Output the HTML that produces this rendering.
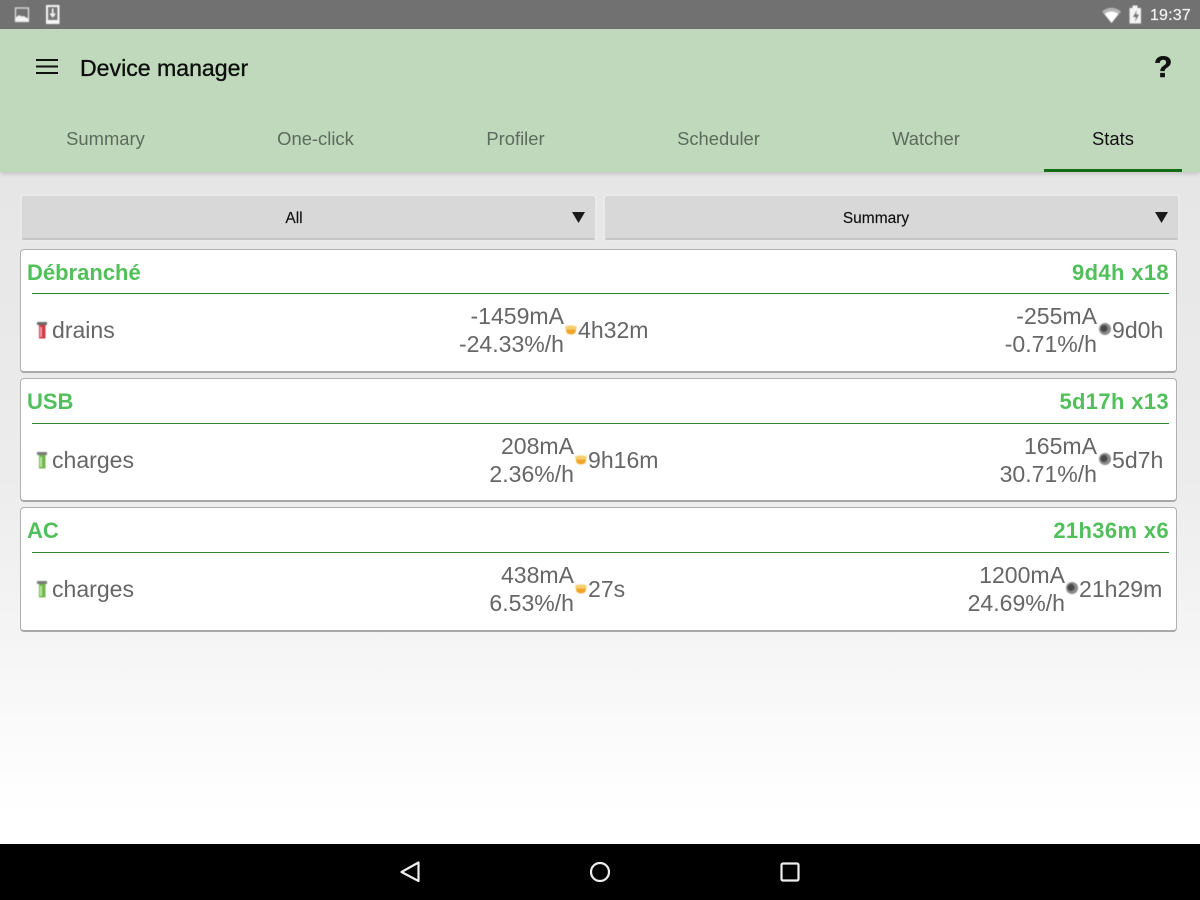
<!DOCTYPE html>
<html>
<head>
<meta charset="utf-8">
<style>
html,body{margin:0;padding:0}
body{width:1200px;height:900px;overflow:hidden;position:relative;font-family:"Liberation Sans",sans-serif;background:#fff}
div,span{position:absolute;white-space:nowrap}
svg{position:absolute;overflow:visible}
#bg{left:0;top:172px;width:1200px;height:672px;background:linear-gradient(#e6e6e6 0,#ececec 300px,#f5f5f5 470px,#fff 640px)}
#status{left:0;top:0;width:1200px;height:29px;background:#727171}
#bar{left:0;top:29px;width:1200px;height:143px;background:#c0d9bc;box-shadow:0 2px 4px rgba(0,0,0,.14)}
#nav{left:0;top:844px;width:1200px;height:56px;background:#000}
.tab{top:128px;font-size:18.4px;line-height:22px;color:#5c6b5c;transform:translateX(-50%)}
.spin{top:196px;height:42px;background:#d7d8d7;border-bottom:2px solid #c4c5c4;border-radius:2px;box-shadow:0 0 0 2px #eaeaea}
.sl{top:209px;font-size:15.500px;line-height:20px;color:#111;transform:translateX(-50%);-webkit-text-stroke:.15px #111}
.card{left:20px;width:1155px;height:121px;background:#fff;border:1px solid #b0b0b0;border-bottom:2px solid #a8a8a8;border-radius:4px;box-sizing:content-box}
.hd{font-size:22px;line-height:26px;font-weight:bold;color:#52c05a}
.hr{letter-spacing:.35px}
.rule{left:32px;width:1137px;height:1px;background:#2a8a30}
.v{font-size:23.050px;line-height:28px;color:#666}
.r{text-align:right}
.ic{filter:blur(.5px)}
</style>
</head>
<body>
<div id="bg"></div>
<div id="status"></div>
<div id="bar"></div>
<div id="nav"></div>

<!-- status icons -->
<svg class="ic" style="left:0;top:0" width="70" height="29">
<rect x="15.500" y="8" width="13" height="13.500" fill="none" stroke="#e8e8e8" stroke-width="1.200"/>
<path d="M16 21v-3.500l3-2.500 2.500 1.500 2-.5 4.500 2.500v2.500z" fill="#f4f4f4"/>
<rect x="46" y="5" width="13.500" height="19" fill="#f6f6f6"/>
<rect x="48" y="7" width="9.500" height="13" fill="#777"/>
<path d="M52.700 8.500v7.500M50.300 13.500l2.400 3 2.400-3" fill="none" stroke="#f6f6f6" stroke-width="1.600"/>
</svg>
<svg class="ic" style="left:1100px;top:0" width="50" height="29">
<path d="M2 11.500Q11.500 4 21 11.500L11.500 23z" fill="#ececec" opacity=".55"/>
<path d="M4.500 14Q11.500 9 18.500 14L11.500 23z" fill="#fff"/>
<path d="M29.500 8h3V5.500h5V8h3.500v15.500H29.500z" fill="#f4f4f4"/>
<path d="M37 10l-4 7h3l-1 5 4-7.500h-3z" fill="#727171"/>
</svg>
<span style="left:1150px;top:6px;font-size:16px;line-height:19px;color:#f0f0f0;letter-spacing:.15px;-webkit-text-stroke:.25px #f0f0f0">19:37</span>

<!-- toolbar -->
<svg style="left:36px;top:59px" width="22" height="16">
<path d="M0 1H22M0 7.500H22M0 14H22" stroke="#111" stroke-width="2" fill="none"/>
</svg>
<span style="left:80px;top:54px;font-size:23.100px;line-height:28px;color:#0c0f0c;-webkit-text-stroke:.35px #0c0f0c">Device manager</span>
<span style="left:1154px;top:49px;font-size:30px;line-height:38px;font-weight:bold;color:#111;-webkit-text-stroke:.5px #111">?</span>

<span class="tab" style="left:105.500px">Summary</span>
<span class="tab" style="left:315.500px">One-click</span>
<span class="tab" style="left:515.500px">Profiler</span>
<span class="tab" style="left:718.500px">Scheduler</span>
<span class="tab" style="left:926px">Watcher</span>
<span class="tab" style="left:1113px;color:#111">Stats</span>
<div style="left:1044px;top:169px;width:138px;height:3px;background:#146c14"></div>

<!-- spinners -->
<div class="spin" style="left:22px;width:573px"></div>
<div class="spin" style="left:605px;width:573px"></div>
<span class="sl" style="left:294px">All</span>
<span class="sl" style="left:876px">Summary</span>
<svg style="left:0;top:0" width="1200" height="240">
<path d="M572 212h13l-6.500 11z" fill="#1a1a1a"/>
<path d="M1155 212h13l-6.500 11z" fill="#1a1a1a"/>
</svg>

<!-- card 1 -->
<div class="card" style="top:249px"></div>
<span class="hd" style="left:27px;top:260px">Débranché</span>
<span class="hd hr r" style="right:31px;top:260px">9d4h x18</span>
<div class="rule" style="top:293px"></div>
<svg class="ic" style="left:36px;top:321px" width="12" height="18">
<path d="M1 1.500h10l-1.500 3v13H3v-13z" fill="#d23a48"/><path d="M1 1h10v3H1z" fill="#6a6a6a"/><path d="M4 6h2v10H4z" fill="#f0a0a8"/>
</svg>
<span class="v" style="left:52px;top:316px">drains</span>
<span class="v r" style="right:636px;top:302px">-1459mA</span>
<span class="v r" style="right:636px;top:330px">-24.33%/h</span>
<svg class="ic" style="left:564px;top:323px" width="14" height="14"><path d="M1 3.500Q7 1 13 3.500L11.500 10Q7 13 2.500 10z" fill="#f6d070"/><path d="M2 6.500h10L11 10Q7 13 3 10z" fill="#f0a428"/></svg>
<span class="v" style="left:578px;top:316px">4h32m</span>
<span class="v r" style="right:103px;top:302px">-255mA</span>
<span class="v r" style="right:103px;top:330px">-0.71%/h</span>
<svg class="ic" style="left:1098px;top:322px" width="14" height="14"><circle cx="7" cy="7" r="6" fill="#8a8a8a"/><circle cx="6" cy="6.500" r="3.500" fill="#484848"/></svg>
<span class="v" style="left:1112px;top:316px">9d0h</span>

<!-- card 2 -->
<div class="card" style="top:378px"></div>
<span class="hd" style="left:27px;top:389px">USB</span>
<span class="hd hr r" style="right:31px;top:389px">5d17h x13</span>
<div class="rule" style="top:423px"></div>
<svg class="ic" style="left:36px;top:451px" width="12" height="18">
<path d="M1 1.500h10l-1.500 3v13H3v-13z" fill="#6fb84a"/><path d="M1 1h10v3H1z" fill="#7a7a7a"/><path d="M4 6h2v10H4z" fill="#c4e8a8"/>
</svg>
<span class="v" style="left:52px;top:446px">charges</span>
<span class="v r" style="right:626px;top:432px">208mA</span>
<span class="v r" style="right:626px;top:460px">2.36%/h</span>
<svg class="ic" style="left:574px;top:453px" width="14" height="14"><path d="M1 3.500Q7 1 13 3.500L11.500 10Q7 13 2.500 10z" fill="#f6d070"/><path d="M2 6.500h10L11 10Q7 13 3 10z" fill="#f0a428"/></svg>
<span class="v" style="left:588px;top:446px">9h16m</span>
<span class="v r" style="right:103px;top:432px">165mA</span>
<span class="v r" style="right:103px;top:460px">30.71%/h</span>
<svg class="ic" style="left:1098px;top:452px" width="14" height="14"><circle cx="7" cy="7" r="6" fill="#8a8a8a"/><circle cx="6" cy="6.500" r="3.500" fill="#484848"/></svg>
<span class="v" style="left:1112px;top:446px">5d7h</span>

<!-- card 3 -->
<div class="card" style="top:507px;height:122px"></div>
<span class="hd" style="left:27px;top:518px">AC</span>
<span class="hd hr r" style="right:31px;top:518px">21h36m x6</span>
<div class="rule" style="top:552px"></div>
<svg class="ic" style="left:36px;top:580px" width="12" height="18">
<path d="M1 1.500h10l-1.500 3v13H3v-13z" fill="#6fb84a"/><path d="M1 1h10v3H1z" fill="#7a7a7a"/><path d="M4 6h2v10H4z" fill="#c4e8a8"/>
</svg>
<span class="v" style="left:52px;top:575px">charges</span>
<span class="v r" style="right:626px;top:561px">438mA</span>
<span class="v r" style="right:626px;top:589px">6.53%/h</span>
<svg class="ic" style="left:574px;top:582px" width="14" height="14"><path d="M1 3.500Q7 1 13 3.500L11.500 10Q7 13 2.500 10z" fill="#f6d070"/><path d="M2 6.500h10L11 10Q7 13 3 10z" fill="#f0a428"/></svg>
<span class="v" style="left:588px;top:575px">27s</span>
<span class="v r" style="right:135px;top:561px">1200mA</span>
<span class="v r" style="right:135px;top:589px">24.69%/h</span>
<svg class="ic" style="left:1065px;top:581px" width="14" height="14"><circle cx="7" cy="7" r="6" fill="#8a8a8a"/><circle cx="6" cy="6.500" r="3.500" fill="#484848"/></svg>
<span class="v" style="left:1079px;top:575px">21h29m</span>

<!-- nav icons -->
<svg style="left:0;top:844px" width="1200" height="56">
<path d="M418.500 18.500V37L401.500 28z" fill="none" stroke="#eee" stroke-width="2.200" stroke-linejoin="round"/>
<circle cx="600" cy="28" r="9" fill="none" stroke="#eee" stroke-width="2.200"/>
<rect x="781.500" y="19.500" width="17" height="17" rx="1.500" fill="none" stroke="#eee" stroke-width="2.200"/>
</svg>
</body>
</html>
